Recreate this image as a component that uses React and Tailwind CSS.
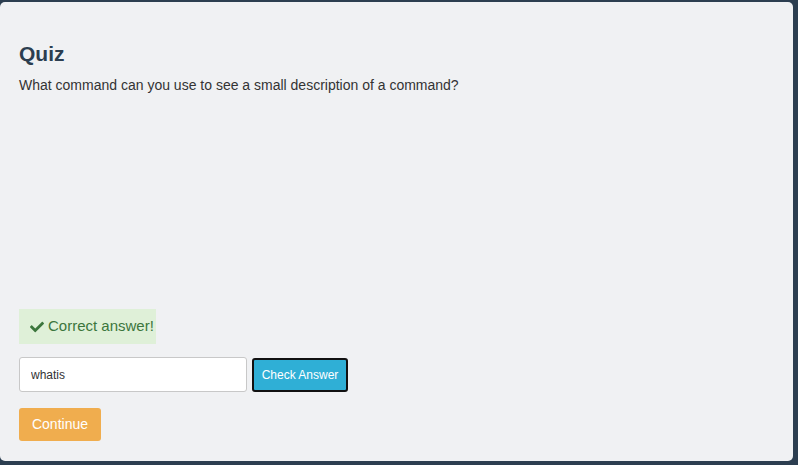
import React, { useState } from 'react';
import { FaCheck } from 'react-icons/fa';

function App() {
  const [answer, setAnswer] = useState('whatis');

  return (
    <div className="h-[465px] w-[798px] bg-[#2c3e50] pt-[2px] pr-[5px] pb-[4px] font-['Liberation_Sans',Arial,sans-serif]">
      <div className="flex h-full flex-col justify-between rounded-[5px] bg-[#f0f1f3] px-[19px] pt-[41px] pb-[20px]">
        {/* question */}
        <div>
          <h3 className="text-[21px] font-bold leading-[22px] text-[#2c3e50]">Quiz</h3>
          <p className="mt-[10px] text-[14px] leading-[20px] text-[#333]">
            What command can you use to see a small description of a command?
          </p>
        </div>

        {/* answer area */}
        <div>
          <div className="flex h-[35px] w-[137px] items-center gap-[4px] bg-[#dff0d8] pl-[11px] text-[15px] text-[#3c763d]">
            <FaCheck className="h-[14px] w-[14px]" />
            <span>Correct answer!</span>
          </div>

          <div className="mt-[13px] flex items-center gap-[5px]">
            <input
              className="h-[35px] w-[228px] rounded-[3px] border border-[#c8c8c8] bg-white px-[11px] text-[12px] text-[#333] outline-none"
              value={answer}
              onChange={({ target }) => setAnswer(target.value)}
            />
            <button
              type="button"
              className="h-[34px] w-[96px] rounded-[3px] border-2 border-[#111] bg-[#2fafd6] text-[12px] text-white"
            >
              Check Answer
            </button>
          </div>

          <button
            type="button"
            className="mt-[16px] h-[33px] w-[82px] rounded-[3px] bg-[#f0ad4e] text-[14px] text-white"
          >
            Continue
          </button>
        </div>
      </div>
    </div>
  );
}

export default App;
